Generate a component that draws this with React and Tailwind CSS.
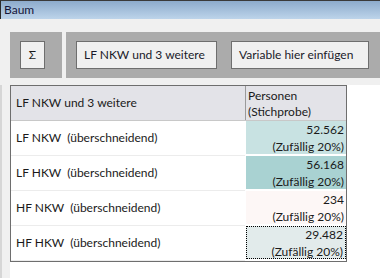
const rows = [
  { label: "LF NKW  (überschneidend)", value: "52.562", bg: "bg-[#c8e2e2]" },
  { label: "LF HKW  (überschneidend)", value: "56.168", bg: "bg-[#a9d2d2]" },
  { label: "HF NKW  (überschneidend)", value: "234", bg: "bg-[#fdf7f6]" },
  { label: "HF HKW  (überschneidend)", value: "29.482", bg: "bg-[#e2ebeb]", focus: true },
];

export default function App() {
  return (
    <div className="w-[380px] h-[278px] overflow-hidden bg-[#f0f0f0] text-[12px] text-[#1a1a1a] font-['Lato',sans-serif] flex flex-col">
      {/* title */}
      <div className="h-[19px] shrink-0 border-t border-[#3a3a3a] border-l border-l-[#2a2a2a] bg-gradient-to-b from-[#8dabcc] to-[#bdd4ea] pl-[3px] leading-[17px] text-[#15153a] whitespace-pre">
        Baum
      </div>

      {/* toolbar */}
      <div className="flex gap-[4px] pl-[10px] pt-[13px] h-[59px] shrink-0">
        <div className="w-[52px] h-[46px] bg-[#ababab] flex items-center pl-[10px]">
          <button className="w-[25px] h-[28px] border border-[#6e6e6e] bg-[#f0f0f0] text-[#1a1a1a] leading-none">Σ</button>
        </div>
        <div className="flex-1 h-[46px] bg-[#ababab] flex items-center pl-[10px] gap-[14px]">
          <button className="w-[141px] h-[28px] border border-[#6e6e6e] bg-[#f0f0f0] text-left pl-[7px] text-[#1a1a2a]">
            LF NKW und 3 weitere
          </button>
          <button className="w-[138px] h-[28px] border border-[#6e6e6e] bg-[#f0f0f0] text-left pl-[7px] text-[#1a1a2a]">
            Variable hier einfügen
          </button>
        </div>
      </div>
      <div className="h-[7px] shrink-0" />

      {/* pane */}
      <div className="flex-1 flex">
        <div className="w-[10px] border-l-2 border-[#d6d6d6]" />
        <div className="flex-1 bg-white">
          <div className="w-[337px] border border-[#6e6e6e]">
            <div className="flex h-[35px] bg-[#e3e3e8] border-b border-[#c8c8c8]">
              <div className="w-[234px] pl-[5px] flex items-center">LF NKW und 3 weitere</div>
              <div className="flex-1 border-l border-[#9a9a9a] pl-[2px] pt-[2px] leading-[16px]">
                <div>Personen</div>
                <div>(Stichprobe)</div>
              </div>
            </div>
            {rows.map((r) => (
              <div key={r.label} className="flex h-[35px]">
                <div className="w-[234px] pl-[5px] flex items-center border-b border-[#ececec] whitespace-pre">
                  {r.label}
                </div>
                <div className="flex-1 border-l border-white border-b-2 border-b-white">
                  <div
                    className={`h-full text-right pr-[2px] leading-[16.5px] ${r.bg} ${
                      r.focus ? "border border-dotted border-black" : "pt-px"
                    }`}
                  >
                    <div>{r.value}</div>
                    <div>(Zufällig 20%)</div>
                  </div>
                </div>
              </div>
            ))}
          </div>
        </div>
      </div>
    </div>
  );
}
